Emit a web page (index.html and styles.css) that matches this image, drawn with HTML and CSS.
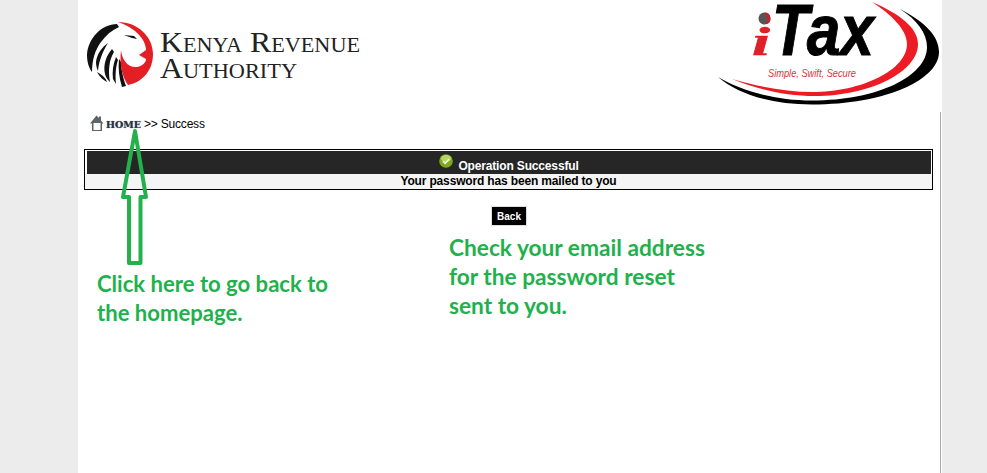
FILE: index.html
```html
<!DOCTYPE html>
<html lang="en">
<head>
<meta charset="utf-8">
<title>iTax - Success</title>
<link rel="stylesheet" href="styles.css">
</head>
<body>
<div class="page">
  <header class="header">
    <svg class="kra-logo" width="300" height="112" viewBox="78 0 300 112" aria-label="Kenya Revenue Authority">
      <g fill="#111">
        <path d="M117 24 C102 24 88 38 87 55 C87 62 89 68 92 72 C92 60 95 50 101 42 C106 35 112 30 119 27 Z"/>
        <path d="M108 43 C102 47 97 54 96 62 C96 66 97 69 98 71 C99 60 103 51 108 43 Z"/>
        <path d="M97 72 C100 77 103 80 107 82 C106 79 103 75 97 72 Z"/>
        <path d="M112 49 C106 56 103 65 105 74 C106 78 108 80 110 82 C108 71 109 60 114 52 Z"/>
        <path d="M116 57 C113 64 112 72 113 79 L116 84 C115 74 116 66 118 60 Z"/>
        <path d="M119 59 C118 68 119 78 122 87 L126 86 C123 78 121 68 121 62 Z"/>
        <path d="M124 35 L134 36 L137 39 L132 38 Z"/>
      </g>
      <path fill="#e31e25" d="M118 22 C138 22 153 37 153 54 C153 70 143 82 128 85 C123 78 119 66 121 50 C122 60 128 68 137 67 C143 66 146 62 146 59 L139 55 L146 50 C146 40 136 28 118 22 Z"/>
      <text class="kra-name" x="160" y="52" textLength="200" lengthAdjust="spacingAndGlyphs">Kenya Revenue</text>
      <text class="kra-name" x="160" y="78" textLength="137" lengthAdjust="spacingAndGlyphs">Authority</text>
    </svg>
    <svg class="itax-logo" width="232" height="112" viewBox="710 0 232 112" aria-label="iTax">
      <path fill="#000" d="M900 9 C925 22 939 36 939 52 C939 80 885 104.500 812 104.500 C770 104.500 738 94 718 77 C742 91 775 100.500 812 100.500 C878 100.500 927 76 927 47 C927 33 917 20 900 9 Z"/>
      <path fill="#ed1c24" d="M872 2 C900 14 918 28 918 44 C918 72 870 96 815 96 C785 96 757 89 732 79 C760 87 787 92 812 92 C862 92 907 70 907 44 C907 30 892 15 872 2 Z"/>
      <text class="itax-tax" x="772" y="55" textLength="102" lengthAdjust="spacingAndGlyphs">Tax</text>
      <text class="itax-i" x="752" y="55" textLength="18" lengthAdjust="spacingAndGlyphs">i</text>
      <circle cx="764.500" cy="18.500" r="6" fill="#555"/>
      <path d="M764.500 12.500 A6 6 0 0 1 766 24.300 C768 20 767 16 764.500 12.500 Z" fill="#c8202a"/>
      <text class="itax-slogan" x="768" y="77" textLength="88" lengthAdjust="spacingAndGlyphs">Simple, Swift, Secure</text>
    </svg>
  </header>
  <main class="main">
    <nav class="crumbs">
      <svg class="home-icon" width="15" height="16" viewBox="0 0 15 16">
        <path d="M0 8.500 L6.500 0.500 L9 3 L9 1.500 L11 1.500 L11 5.500 L13.500 8.500 L12 8.500 L12 16 L2 16 L2 8.500 Z" fill="#5f6468"/>
        <rect x="3.500" y="8" width="7" height="7" fill="#fff"/>
      </svg>
      <span class="home-text">HOME</span>
      <span class="crumb-rest">&gt;&gt; Success</span>
    </nav>
    <section class="notice">
      <div class="notice-head">
        <svg class="ok-icon" width="14" height="14" viewBox="0 0 14 14">
          <circle cx="7" cy="7" r="6.800" fill="#7ea91e"/>
          <ellipse cx="7" cy="4.500" rx="5" ry="3.400" fill="#b7d566"/>
          <path d="M4 7.200 L6.200 9.400 L10.200 5" fill="none" stroke="#f2f7e4" stroke-width="1.600"/>
        </svg>
        <span>Operation Successful</span>
      </div>
      <div class="notice-body">Your password has been mailed to you</div>
    </section>
    <div class="actions">
      <button class="back" type="button">Back</button>
    </div>
  </main>
  <svg class="arrow" width="36" height="140" viewBox="0 0 36 140">
    <path d="M15 3 L3 69 L9 69 L9 135 L20.500 135 L20.500 69 L26 69 Z" fill="none" stroke="#22b14c" stroke-width="4" stroke-linejoin="round"/>
  </svg>
  <p class="note note-left">Click here to go back to<br>the homepage.</p>
  <p class="note note-right">Check your email address<br>for the password reset<br>sent to you.</p>
</div>
</body>
</html>
```
FILE: styles.css
```css
html, body {
  margin: 0;
  height: 100%;
  background: #ececec;
  overflow: hidden;
}
body {
  font-family: "Liberation Sans", Arial, sans-serif;
  font-size: 12px;
}
.page {
  position: relative;
  width: 864px;
  height: 100%;
  margin-left: 78px;
  background: #fff;
  display: flex;
  flex-direction: column;
}
.header {
  display: flex;
  justify-content: space-between;
  height: 112px;
  flex: none;
}
.kra-name {
  font-family: "Liberation Serif", serif;
  font-variant: small-caps;
  font-size: 30px;
  fill: #222;
}
.itax-tax {
  font-family: "Liberation Sans", sans-serif;
  font-style: italic;
  font-weight: 700;
  font-size: 72px;
  fill: #000;
  stroke: #000;
  stroke-width: 1px;
}
.itax-i {
  font-family: "Liberation Serif", serif;
  font-style: italic;
  font-weight: 700;
  font-size: 40px;
  fill: #e01f26;
  stroke: #e01f26;
  stroke-width: 0.600px;
}
.itax-slogan {
  font-family: "Liberation Sans", sans-serif;
  font-style: italic;
  font-size: 11px;
  fill: #d5333a;
}
.main {
  flex: 1;
  margin-right: 1px;
  border-right: 1px solid #aaa;
  padding: 3px 7px 0 6px;
}
.crumbs {
  display: flex;
  align-items: flex-start;
  height: 18px;
  margin-left: 6px;
}
.home-icon {
  flex: none;
}
.home-text {
  font-family: "DejaVu Serif", "Liberation Serif", serif;
  font-weight: 700;
  font-size: 9.500px;
  line-height: 18px;
  padding-top: 1px;
  color: #2b3443;
  text-shadow: 0 0 1px #567;
  margin-left: 1px;
  width: 38px;
}
.crumb-rest {
  font-size: 12px;
  letter-spacing: -0.200px;
  line-height: 18px;
  color: #000;
}
.notice {
  margin-top: 16px;
  border: 1px solid #000;
  text-align: center;
  font-weight: 700;
  font-size: 12px;
  letter-spacing: -0.160px;
}
.notice-head {
  margin: 1px 1px 0 2px;
  height: 23px;
  background: #262626;
  color: #fff;
  display: flex;
  justify-content: center;
  align-items: flex-end;
  gap: 5px;
  line-height: 15px;
}
.ok-icon {
  margin-bottom: 6px;
}
.notice-body {
  height: 15px;
  line-height: 15px;
  background: #f5f5f5;
  color: #000;
}
.actions {
  margin-top: 16px;
  text-align: center;
  padding-left: 1px;
}
.back {
  display: inline-block;
  width: 36px;
  height: 20px;
  padding: 0;
  background: #000;
  color: #fff;
  border: 1px solid #ddd;
  font-family: "Liberation Sans", sans-serif;
  font-weight: 700;
  font-size: 10px;
}
.arrow {
  position: absolute;
  left: 42px;
  top: 128px;
}
.note {
  position: absolute;
  margin: 0;
  font-family: Lato, "Open Sans", sans-serif;
  font-weight: 700;
  line-height: 29px;
  color: #1fb14c;
}
.note-left {
  left: 19px;
  top: 269px;
  font-size: 22.100px;
}
.note-right {
  left: 371px;
  top: 233px;
  font-size: 22.700px;
}
```
